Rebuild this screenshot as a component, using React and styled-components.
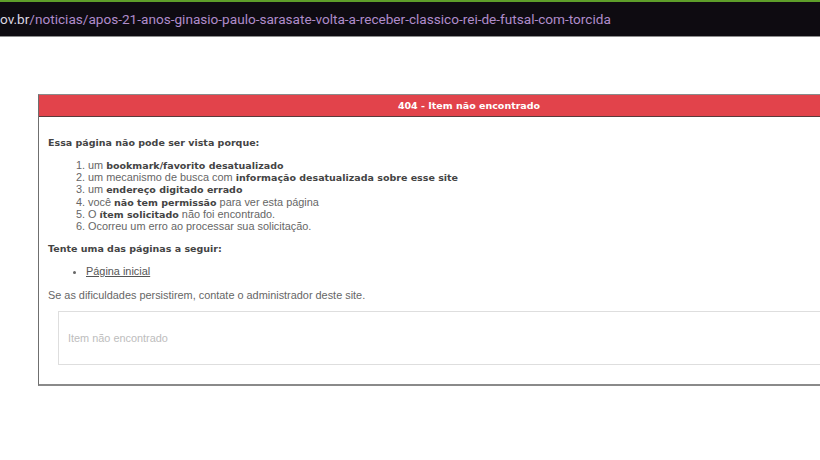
import React from 'react';
import styled, { createGlobalStyle } from 'styled-components';

const GlobalStyle = createGlobalStyle`
  html, body {
    margin: 0;
    padding: 0;
    background: #ffffff;
    overflow: hidden;
  }
`;

const AddressBar = styled.div`
  height: 34px;
  background: #0e0b11;
  border-top: 2px solid #5e9e2a;
  border-bottom: 1px solid #8d8d8d;
  display: flex;
  align-items: center;
  white-space: nowrap;
  font-family: Roboto, 'Liberation Sans', sans-serif;
  font-size: 13.6px;
`;

const Host = styled.span`
  color: #dcd8e2;
`;

const Path = styled.span`
  color: #b08ccb;
`;

const Page = styled.div`
  padding: 57px 0 0 38px;
`;

const Panel = styled.div`
  width: 860px;
  border: 1px solid #8a8a8a;
  border-bottom: 2px solid #8a8a8a;
  border-left-color: #6f6f6f;
  font-family: 'Liberation Sans', Arial, sans-serif;
  font-size: 10.9px;
  color: #666666;
`;

const Header = styled.div`
  height: 21px;
  background: #e2434b;
  border-bottom: 1px solid #5a3a3c;
  color: #ffffff;
  font-family: 'DejaVu Sans', Verdana, sans-serif;
  font-weight: bold;
  font-size: 9.5px;
  display: flex;
  align-items: center;
  justify-content: center;
`;

const Body = styled.div`
  padding: 19px 0 19px 9px;
`;

const Heading = styled.div`
  font-family: 'DejaVu Sans', Verdana, sans-serif;
  font-weight: bold;
  font-size: 9.5px;
  color: #444444;
  line-height: 13px;
`;

const Reasons = styled.ol`
  margin: 10px 0 10px 0;
  padding-left: 40px;
`;

const Reason = styled.li`
  height: 12.2px;
  line-height: 12.2px;
`;

const Strong = styled.b`
  font-family: 'DejaVu Sans', Verdana, sans-serif;
  font-size: 9.5px;
  line-height: 1;
  color: #444444;
`;

const Links = styled.ul`
  margin: 10px 0 11px 0;
  padding-left: 38px;
  line-height: 13px;
`;

const HomeLink = styled.a`
  color: #555555;
  text-decoration: underline;
`;

const Note = styled.p`
  margin: 0;
  line-height: 13px;
`;

const MessageBox = styled.div`
  margin: 9px 0 0 10px;
  height: 52px;
  border: 1px solid #dedede;
  display: flex;
  align-items: center;
  padding-left: 9px;
  color: #bdbdbd;
`;

export default function App() {
  return (
    <>
      <GlobalStyle />
      <AddressBar>
        <Host>ov.br</Host>
        <Path>/noticias/apos-21-anos-ginasio-paulo-sarasate-volta-a-receber-classico-rei-de-futsal-com-torcida</Path>
      </AddressBar>
      <Page>
        <Panel>
          <Header>404 - Item não encontrado</Header>
          <Body>
            <Heading>Essa página não pode ser vista porque:</Heading>
            <Reasons>
              <Reason>um <Strong>bookmark/favorito desatualizado</Strong></Reason>
              <Reason>um mecanismo de busca com <Strong>informação desatualizada sobre esse site</Strong></Reason>
              <Reason>um <Strong>endereço digitado errado</Strong></Reason>
              <Reason>você <Strong>não tem permissão</Strong> para ver esta página</Reason>
              <Reason>O <Strong>ítem solicitado</Strong> não foi encontrado.</Reason>
              <Reason>Ocorreu um erro ao processar sua solicitação.</Reason>
            </Reasons>
            <Heading>Tente uma das páginas a seguir:</Heading>
            <Links>
              <li><HomeLink href="#">Página inicial</HomeLink></li>
            </Links>
            <Note>Se as dificuldades persistirem, contate o administrador deste site.</Note>
            <MessageBox>Item não encontrado</MessageBox>
          </Body>
        </Panel>
      </Page>
    </>
  );
}
